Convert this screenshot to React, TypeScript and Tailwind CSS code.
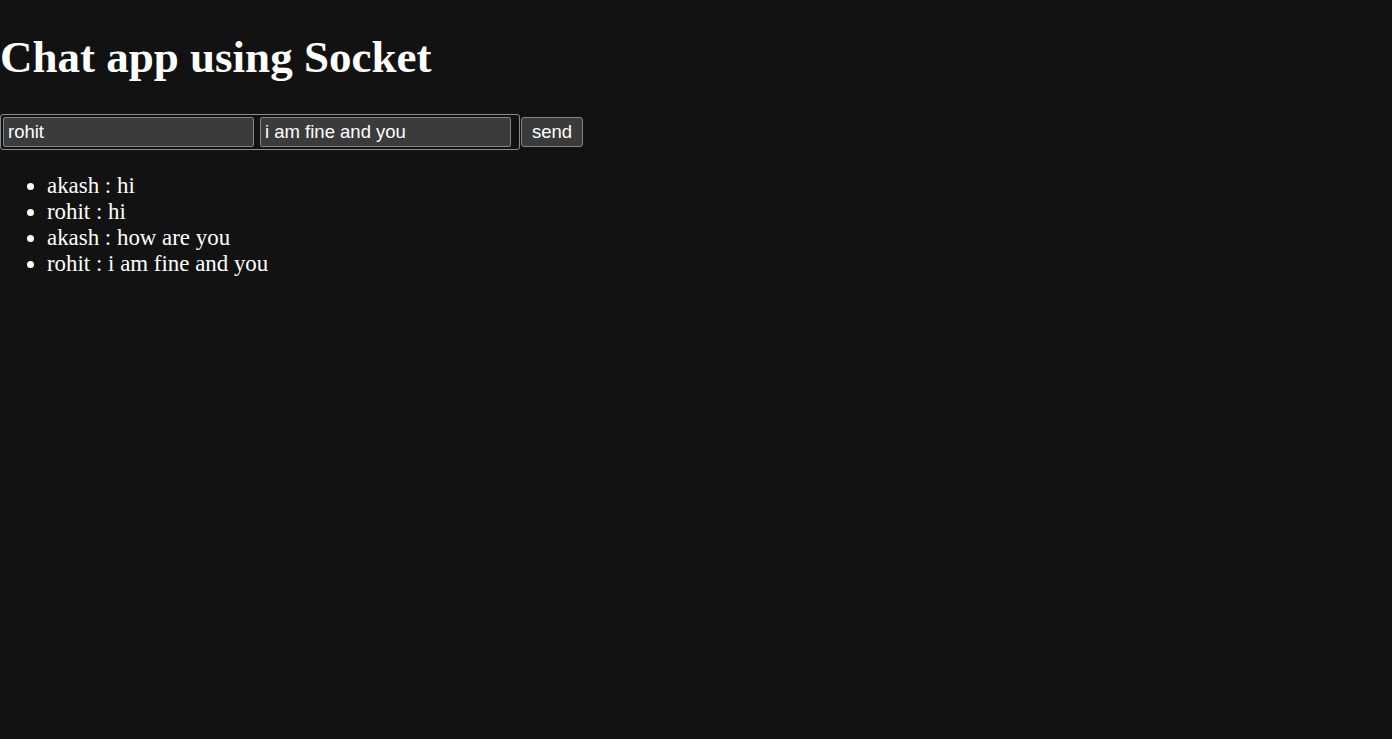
import type { JSX } from 'react';
import { useState } from 'react';

type Message = {
  user: string;
  text: string;
};

const INITIAL_MESSAGES: Message[] = [
  { user: 'akash', text: 'hi' },
  { user: 'rohit', text: 'hi' },
  { user: 'akash', text: 'how are you' },
  { user: 'rohit', text: 'i am fine and you' },
];

const serif = "font-['Liberation_Serif','Times_New_Roman',serif]";
const sans = "font-['Liberation_Sans',Arial,sans-serif]";

export default function App(): JSX.Element {
  const [name, setName] = useState('rohit');
  const [text, setText] = useState('i am fine and you');
  const [messages, setMessages] = useState<Message[]>(INITIAL_MESSAGES);

  const handleSend = (): void => {
    if (!text.trim()) return;
    setMessages((prev) => [...prev, { user: name, text }]);
    setText('');
  };

  return (
    <div className={`min-h-[739px] bg-[#121212] text-white ${serif}`}>
      <h1 className="pt-[32px] text-[45px] font-bold leading-[51px]">Chat app using Socket</h1>

      <div className="mt-[31px] flex items-start">
        <div className="flex items-center gap-[6px] rounded-[3px] border border-[#8a8a8a] py-[2px] pl-[2px] pr-[8px]">
          <input
            value={name}
            onChange={(event) => setName(event.target.value)}
            className={`h-[30px] w-[251px] rounded-[2px] border border-[#858585] bg-[#3b3b3b] px-[4px] text-[18.5px] text-white outline-none ${sans}`}
          />
          <input
            value={text}
            onChange={(event) => setText(event.target.value)}
            className={`h-[30px] w-[251px] rounded-[2px] border border-[#858585] bg-[#3b3b3b] px-[4px] text-[18.5px] text-white outline-none ${sans}`}
          />
        </div>
        <button
          type="button"
          onClick={handleSend}
          className={`ml-[1px] mt-[3px] h-[30px] w-[62px] rounded-[3px] border border-[#858585] bg-[#3b3b3b] text-[18.5px] text-white ${sans}`}
        >
          send
        </button>
      </div>

      <ul className="mt-[23px] list-disc pl-[47px] text-[22.9px] leading-[26px]">
        {messages.map((message, index) => (
          <li key={index}>
            {message.user} : {message.text}
          </li>
        ))}
      </ul>
    </div>
  );
}
